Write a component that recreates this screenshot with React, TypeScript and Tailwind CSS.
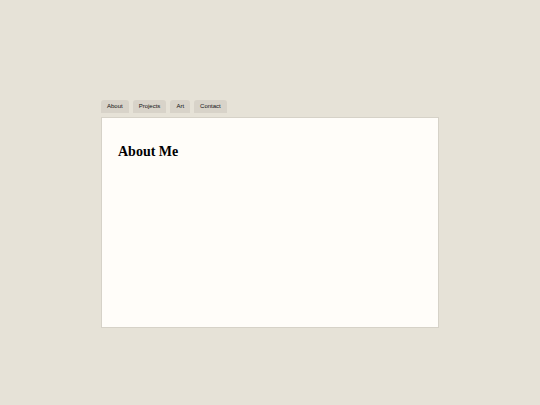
const tabs = ["About", "Projects", "Art", "Contact"];

export default function App() {
  return (
    <div className="flex h-[405px] w-[540px] items-start justify-center bg-[#e6e2d7] pt-[100px] font-['Liberation_Sans',sans-serif]">
      <div className="flex w-[338px] flex-col">
        <nav className="flex gap-[4px]">
          {tabs.map((tab) => (
            <button
              key={tab}
              type="button"
              className="h-[13px] rounded-t-[3px] bg-[#d8d3c9] px-[6px] text-[6px] leading-[13px] text-[#111]"
            >
              {tab}
            </button>
          ))}
        </nav>
        <main className="mt-[4px] h-[211px] border border-[#d6d2c8] bg-[#fffdf9] px-[16px] pt-[25px]">
          <h1 className="font-['Liberation_Serif',serif] text-[14px] font-bold leading-[18px] text-black">
            About Me
          </h1>
        </main>
      </div>
    </div>
  );
}
